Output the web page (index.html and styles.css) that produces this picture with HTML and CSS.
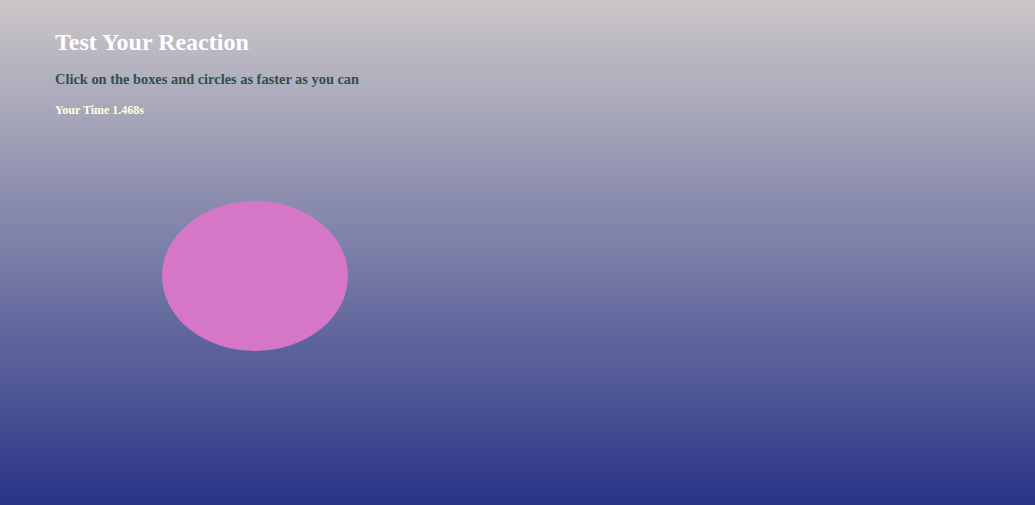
FILE: index.html
```html
<!DOCTYPE html>
<html>
<head>
<meta charset="utf-8">
<link rel="stylesheet" href="styles.css">
</head>
<body>
<div class="page">
  <h1 class="title">Test Your Reaction</h1>
  <p class="subtitle">Click on the boxes and circles as faster as you can</p>
  <p class="time">Your Time <span>1.468s</span></p>
  <div class="arena">
    <div class="shape"></div>
  </div>
</div>
</body>
</html>
```
FILE: styles.css
```css
html, body {
  margin: 0;
  height: 100%;
}
body {
  background: linear-gradient(to bottom, #cbc7c8 0%, #2a3587 100%);
  font-family: "Liberation Serif", "Times New Roman", serif;
}
.page {
  padding: 28px 55px 0;
}
.title {
  margin: 0;
  font-size: 24px;
  font-weight: bold;
  color: #ffffff;
  line-height: 28px;
}
.subtitle {
  margin: 14px 0 0;
  font-size: 14.4px;
  font-weight: bold;
  color: #2f4f4f;
  line-height: 18px;
}
.time {
  margin: 15px 0 0;
  font-size: 12px;
  font-weight: bold;
  color: #ffffe0;
  line-height: 14px;
}
.arena {
  position: relative;
  height: 260px;
}
.shape {
  position: absolute;
  left: 107px;
  top: 84px;
  width: 186px;
  height: 150px;
  border-radius: 50%;
  background: #d576c7;
}
```
